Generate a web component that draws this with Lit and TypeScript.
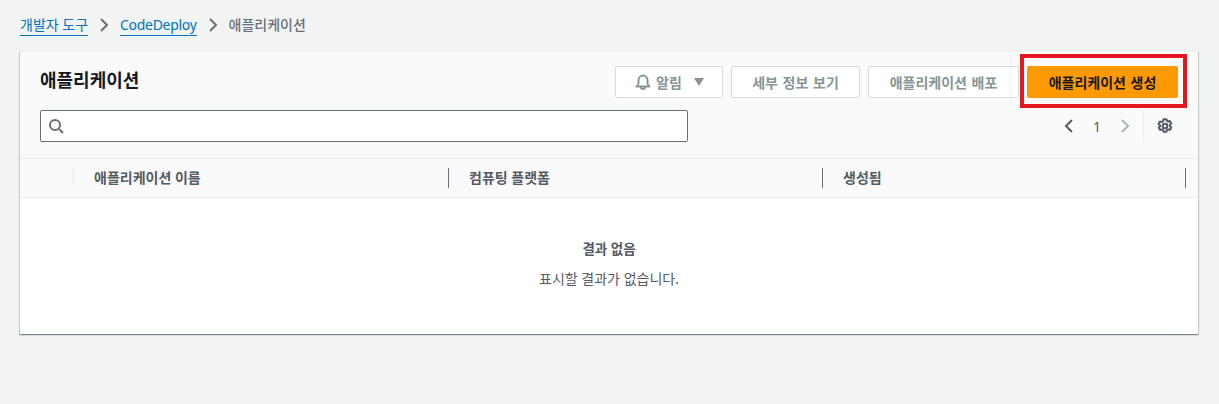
import { LitElement, html, css } from "lit";
import { customElement } from "lit/decorators.js";

@customElement("app-root")
export class AppRoot extends LitElement {
  static styles = css`
    :host {
      display: block;
      min-height: 404px;
      background: #f2f3f3;
      font-family: "Noto Sans", "Noto Sans CJK KR", sans-serif;
      font-size: 14px;
      color: #16191f;
      box-sizing: border-box;
      padding: 14px 21px 0 20px;
    }
    * { box-sizing: border-box; }
    .crumbs {
      display: flex;
      align-items: center;
      height: 22px;
      line-height: 20px;
      margin-bottom: 15px;
    }
    .crumbs a {
      color: #0073bb;
      border-bottom: 1px solid #0073bb;
      height: 21px;
      line-height: 20px;
      text-decoration: none;
    }
    .crumbs a.latin { letter-spacing: -0.3px; }
    .crumbs .sep { width: 32px; display: flex; justify-content: center; }
    .crumbs .here { color: #687078; font-weight: 500; }
    .card {
      position: relative;
      background: #fff;
      height: 283px;
      box-shadow: 0 1px 1px 0 rgba(0, 28, 36, 0.3), 1px 1px 1px 0 rgba(0, 28, 36, 0.15), -1px 1px 1px 0 rgba(0, 28, 36, 0.15);
      border-top: 1px solid #eaeded;
    }
    .top {
      background: #fafafa;
      height: 106px;
      padding: 14px 20px 0 20px;
      display: flex;
      flex-direction: column;
    }
    .row1 { display: flex; justify-content: space-between; align-items: flex-start; height: 44px; }
    h1 { margin: 0; font-size: 18px; font-weight: 700; line-height: 28px; color: #16191f; }
    .actions { display: flex; gap: 8px; }
    .btn {
      height: 32px;
      border: 1px solid #d5dbdb;
      border-radius: 2px;
      background: #fff;
      color: #879596;
      font: inherit;
      font-weight: 700;
      font-size: 14px;
      word-spacing: 1px;
      display: flex;
      align-items: center;
      justify-content: center;
      padding: 0;
    }
    .b1 { width: 108px; gap: 5px; padding-left: 2px; }
    .b1 .caret { margin-left: 6px; }
    .b2 { width: 129px; }
    .b3 { width: 151px; }
    .b4 { width: 151px; background: #ff9900; border-color: #ff9900; color: #16191f; }
    .row2 { display: flex; justify-content: space-between; align-items: center; height: 32px; }
    .search {
      width: 648px;
      height: 32px;
      background: #fff;
      border: 1px solid #687078;
      border-radius: 2px;
      display: flex;
      align-items: center;
      padding-left: 7px;
    }
    .pager { display: flex; align-items: center; height: 32px; margin-right: 5px; }
    .pg { width: 24px; display: flex; justify-content: center; align-items: center; }
    .num { width: 32px; text-align: center; color: #545b64; font-size: 14px; }
    .div { width: 1px; height: 32px; background: #eaeded; margin: 0 13px 0 6px; }
    .gear { display: flex; }
    .thead {
      display: grid;
      grid-template-columns: 54px 375px 374px 363px 12px;
      height: 40px;
      background: #fafafa;
      border-top: 1px solid #eaeded;
      border-bottom: 1px solid #eaeded;
      align-items: center;
      font-weight: 700;
      color: #545b64;
    }
    .th { height: 20px; border-right: 1px solid #eaeded; line-height: 19px; padding-left: 20px; }
    .th.first { padding: 0; }
    .th.dark { border-right-color: #687078; }
    .last { height: 20px; }
    .empty {
      height: 136px;
      display: flex;
      flex-direction: column;
      align-items: center;
      padding-top: 41px;
      color: #545b64;
      line-height: 20px;
    }
    .empty b { font-weight: 700; margin-bottom: 10px; font-size: 13.5px; }
    .empty span { font-size: 14px; }
    .mark {
      position: absolute;
      left: 1000px;
      top: 2px;
      width: 167px;
      height: 54px;
      border: 4px solid #e7171e;
      pointer-events: none;
    }
  `;

  render() {
    return html`
      <nav class="crumbs">
        <a href="#">개발자 도구</a>
        <span class="sep"><svg width="16" height="16" viewBox="0 0 16 16"><path d="M5 2l6 6-6 6" fill="none" stroke="#687078" stroke-width="2"/></svg></span>
        <a class="latin" href="#">CodeDeploy</a>
        <span class="sep"><svg width="16" height="16" viewBox="0 0 16 16"><path d="M5 2l6 6-6 6" fill="none" stroke="#687078" stroke-width="2"/></svg></span>
        <span class="here">애플리케이션</span>
      </nav>
      <section class="card">
        <div class="top">
          <div class="row1">
            <h1>애플리케이션</h1>
            <div class="actions">
              <button class="btn b1">
                <svg width="16" height="16" viewBox="0 0 16 16" fill="none" stroke="#879596" stroke-width="1.900"><path d="M1.500 12.500c1.200-1 2-2 2-3.500V6a4.500 4.500 0 0 1 9 0v3c0 1.500.8 2.500 2 3.500z" stroke-linejoin="round"/><path d="M5.800 12.800a2.200 2.200 0 0 0 4.400 0"/></svg>
                <span>알림</span>
                <svg class="caret" width="12" height="10" viewBox="0 0 12 10"><path d="M1 1h10L6 9z" fill="#879596"/></svg>
              </button>
              <button class="btn b2">세부 정보 보기</button>
              <button class="btn b3">애플리케이션 배포</button>
              <button class="btn b4">애플리케이션 생성</button>
            </div>
          </div>
          <div class="row2">
            <div class="search">
              <svg width="16" height="16" viewBox="0 0 16 16" fill="none" stroke="#687078" stroke-width="2"><circle cx="7" cy="7" r="5"/><path d="M11 11l4 4"/></svg>
            </div>
            <div class="pager">
              <span class="pg"><svg width="16" height="16" viewBox="0 0 16 16"><path d="M11 2L5 8l6 6" fill="none" stroke="#545b64" stroke-width="2"/></svg></span>
              <span class="num">1</span>
              <span class="pg"><svg width="16" height="16" viewBox="0 0 16 16"><path d="M5 2l6 6-6 6" fill="none" stroke="#aab7b8" stroke-width="2"/></svg></span>
              <span class="div"></span>
              <span class="gear"><svg width="16" height="16" viewBox="0 0 16 16" fill="none" stroke="#545b64" stroke-width="2" stroke-linejoin="round"><circle cx="8" cy="8" r="2.300"/><path d="M6.500 1.200h3l.3 1.700 1.300.7 1.700-.6 1.500 2.500-1.400 1.200v1.600l1.400 1.200-1.500 2.500-1.700-.6-1.300.7-.3 1.700h-3l-.3-1.700-1.300-.7-1.700.6-1.500-2.500 1.400-1.200V7.200L1.500 6 3 3.500l1.700.6 1.300-.7z"/></svg></span>
            </div>
          </div>
        </div>
        <div class="thead">
          <div class="th first"></div>
          <div class="th dark">애플리케이션 이름</div>
          <div class="th dark">컴퓨팅 플랫폼</div>
          <div class="th dark">생성됨</div>
          <div class="last"></div>
        </div>
        <div class="empty">
          <b>결과 없음</b>
          <span>표시할 결과가 없습니다.</span>
        </div>
        <div class="mark"></div>
      </section>
    `;
  }
}
